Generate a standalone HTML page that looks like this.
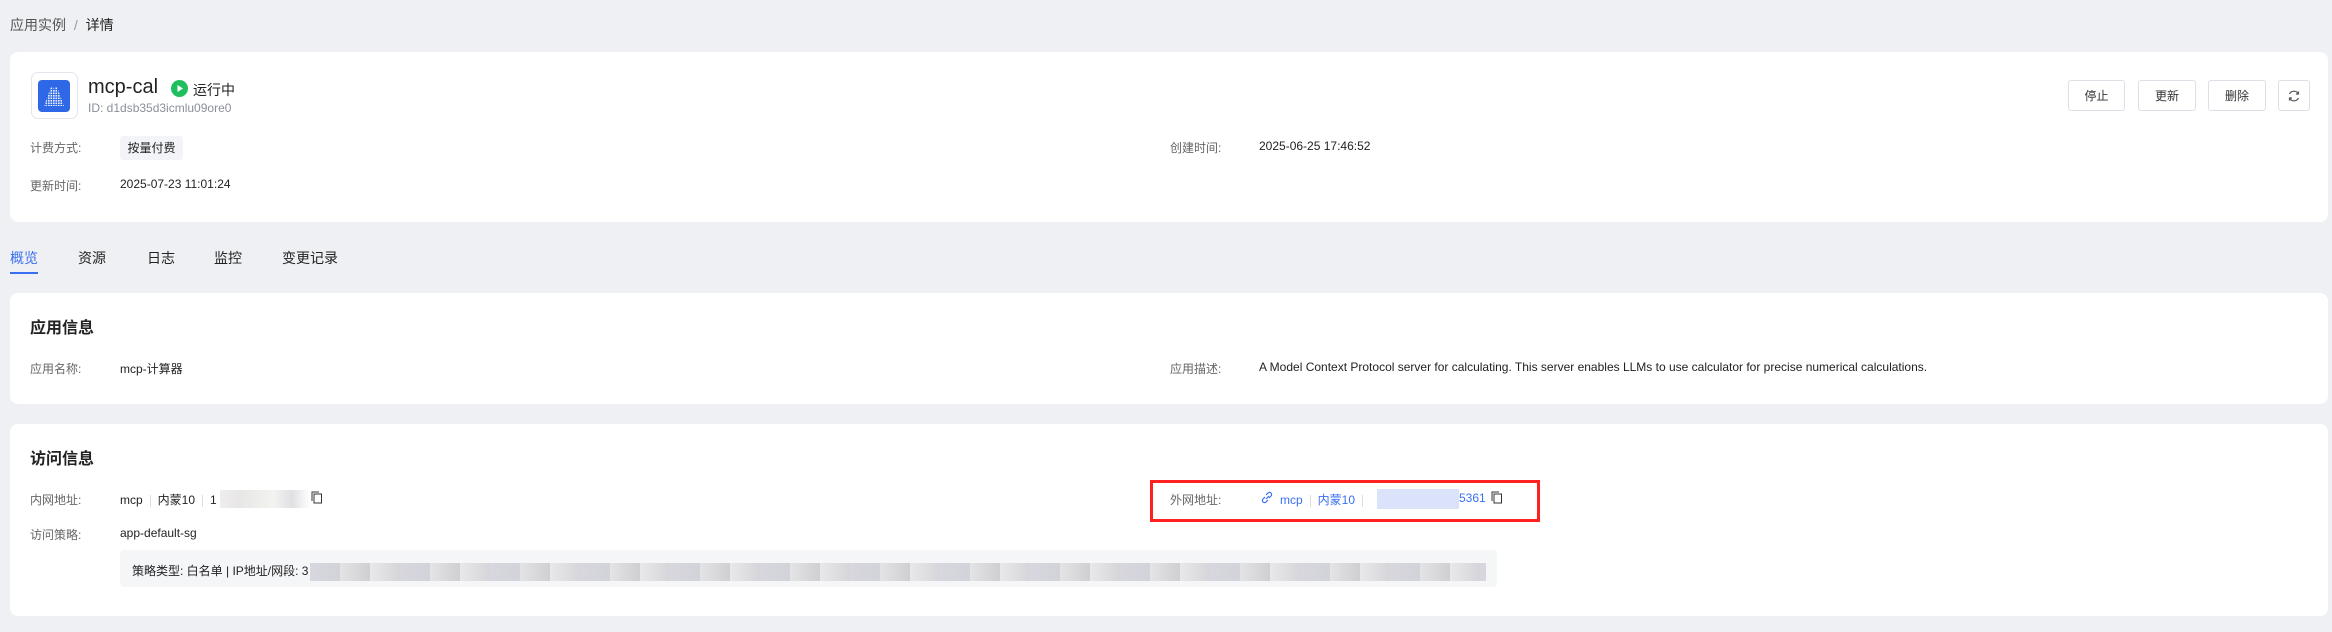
<!DOCTYPE html>
<html><head><meta charset="utf-8"><style>
*{margin:0;padding:0;box-sizing:border-box}
body{width:2332px;height:632px;background:#eff0f4;font-family:"Liberation Sans","Noto Sans CJK SC",sans-serif;color:#222;position:relative;overflow:hidden;font-size:12px}
.a{position:absolute;white-space:nowrap}
.card{position:absolute;left:10px;width:2318px;background:#fff;border-radius:8px}
.lbl{color:#666;font-size:12px}
.val{color:#222;font-size:12px}
.btn{position:absolute;top:80px;height:31px;border:1px solid #dcdfe6;border-radius:3px;background:#fff;font-size:12px;display:flex;align-items:center;justify-content:center;color:#333}
.sep{display:inline-block;width:1px;height:12px;background:#ddd;margin:0 7px;vertical-align:middle}
.blue{color:#3a6ff2}
</style></head><body>
<div class="a" style="left:10px;top:15px;font-size:14px;color:#555">应用实例 <span style="color:#999;margin:0 4px">/</span> <span style="color:#222">详情</span></div>

<div class="card" style="top:52px;height:170px"></div>
<div class="a" style="left:31px;top:72px;width:47px;height:47px;border:1px solid #e3e5ec;border-radius:7px;background:#fff"></div>
<div class="a" style="left:38px;top:80px;width:32px;height:32px;background:#2f68e6;border-radius:4px;overflow:hidden">
<svg width="32" height="32" viewBox="0 0 32 32"><g fill="#fff" opacity="0.9">
<polygon points="13,7 15,7 16,10 17,7 19,7 26,26 6,26" fill="url(#p)"/></g>
<defs><pattern id="p" width="2.5" height="2.5" patternUnits="userSpaceOnUse"><rect width="1.6" height="1.6" fill="#fff"/></pattern></defs></svg></div>
<div class="a" style="left:88px;top:76px;font-size:20px;color:#222">mcp-cal</div>
<svg class="a" style="left:171px;top:80px" width="17" height="17" viewBox="0 0 17 17"><circle cx="8.5" cy="8.5" r="8.5" fill="#1fbf5f"/><path d="M6.5 5 L12 8.5 L6.5 12Z" fill="#fff"/></svg>
<div class="a" style="left:193px;top:80px;font-size:14px;color:#222">运行中</div>
<div class="a" style="left:88px;top:101px;font-size:12px;color:#8a8f99">ID: d1dsb35d3icmlu09ore0</div>

<div class="btn" style="left:2068px;width:57px">停止</div>
<div class="btn" style="left:2138px;width:58px">更新</div>
<div class="btn" style="left:2208px;width:58px">删除</div>
<div class="btn" style="left:2278px;width:32px"><svg width="14" height="14" viewBox="0 0 14 14" fill="none" stroke="#555" stroke-width="1.2"><path d="M11.5 5A5 5 0 0 0 2.5 5"/><path d="M2.5 9A5 5 0 0 0 11.5 9"/><path d="M11.5 2.5V5H9"/><path d="M2.5 11.5V9H5"/></svg></div>

<div class="a lbl" style="left:30px;top:139px">计费方式:</div>
<div class="a val" style="left:120px;top:136px;width:63px;height:24px;background:#f3f4f7;border-radius:3px;text-align:center;line-height:24px">按量付费</div>
<div class="a lbl" style="left:1170px;top:139px">创建时间:</div>
<div class="a val" style="left:1259px;top:139px">2025-06-25 17:46:52</div>
<div class="a lbl" style="left:30px;top:177px">更新时间:</div>
<div class="a val" style="left:120px;top:177px">2025-07-23 11:01:24</div>

<div class="a" style="left:10px;top:248px;font-size:14px;color:#3a6ff2">概览</div>
<div class="a" style="left:10px;top:272px;width:28px;height:2px;background:#3a6ff2"></div>
<div class="a" style="left:78px;top:248px;font-size:14px">资源</div>
<div class="a" style="left:147px;top:248px;font-size:14px">日志</div>
<div class="a" style="left:214px;top:248px;font-size:14px">监控</div>
<div class="a" style="left:282px;top:248px;font-size:14px">变更记录</div>

<div class="card" style="top:293px;height:111px"></div>
<div class="a" style="left:30px;top:314px;font-size:16px;font-weight:bold;color:#222">应用信息</div>
<div class="a lbl" style="left:30px;top:360px">应用名称:</div>
<div class="a val" style="left:120px;top:360px">mcp-计算器</div>
<div class="a lbl" style="left:1170px;top:360px">应用描述:</div>
<div class="a val" style="left:1259px;top:360px">A Model Context Protocol server for calculating. This server enables LLMs to use calculator for precise numerical calculations.</div>

<div class="card" style="top:424px;height:192px"></div>
<div class="a" style="left:30px;top:445px;font-size:16px;font-weight:bold;color:#222">访问信息</div>
<div class="a lbl" style="left:30px;top:491px">内网地址:</div>
<div class="a val" style="left:120px;top:491px">mcp<span class="sep"></span>内蒙10<span class="sep"></span>1</div>
<div class="a" style="left:220px;top:490px;width:90px;height:18px;background:linear-gradient(90deg,#eee 0,#e8e6e6 20%,#eceeea 40%,#f3f3f1 60%,#e0dfe2 80%,#fff 100%)"></div>
<svg class="a" style="left:311px;top:491px" width="12" height="13" viewBox="0 0 12 13" fill="none" stroke="#333" stroke-width="1"><rect x="3" y="3" width="7.5" height="9"/><path d="M1 10V1h7"/></svg>
<div class="a lbl" style="left:30px;top:526px">访问策略:</div>
<div class="a val" style="left:120px;top:526px">app-default-sg</div>
<div class="a" style="left:120px;top:550px;width:1377px;height:37px;background:#f5f6f8;border-radius:4px"></div>
<div class="a val" style="left:132px;top:562px">策略类型: 白名单 | IP地址/网段: 3</div>
<div class="a" style="left:310px;top:563px;width:1176px;height:18px;background:repeating-linear-gradient(90deg,#d8d6de 0,#d2d4da 30px,#e4e4e6 30px,#cfcfd3 60px,#e8e8ea 60px,#d6d6da 90px)"></div>

<div class="a" style="left:1150px;top:480px;width:390px;height:42px;border:3px solid #ff2020"></div>
<div class="a lbl" style="left:1170px;top:491px">外网地址:</div>
<svg class="a" style="left:1261px;top:491px" width="12" height="13" viewBox="0 0 12 13" fill="none" stroke="#3a6ff2" stroke-width="1.2"><path d="M5 8l3-3M4 6l-2 2a2 2 0 0 0 3 3l2-2M8 7l2-2a2 2 0 0 0-3-3L5 4"/></svg>
<div class="a val blue" style="left:1280px;top:491px">mcp<span class="sep"></span>内蒙10<span class="sep"></span></div>
<div class="a" style="left:1377px;top:489px;width:82px;height:20px;background:#dbe3fb"></div>
<div class="a val blue" style="left:1459px;top:491px">5361</div>
<svg class="a" style="left:1491px;top:491px" width="12" height="13" viewBox="0 0 12 13" fill="none" stroke="#333" stroke-width="1"><rect x="3" y="3" width="7.5" height="9"/><path d="M1 10V1h7"/></svg>
</body></html>
